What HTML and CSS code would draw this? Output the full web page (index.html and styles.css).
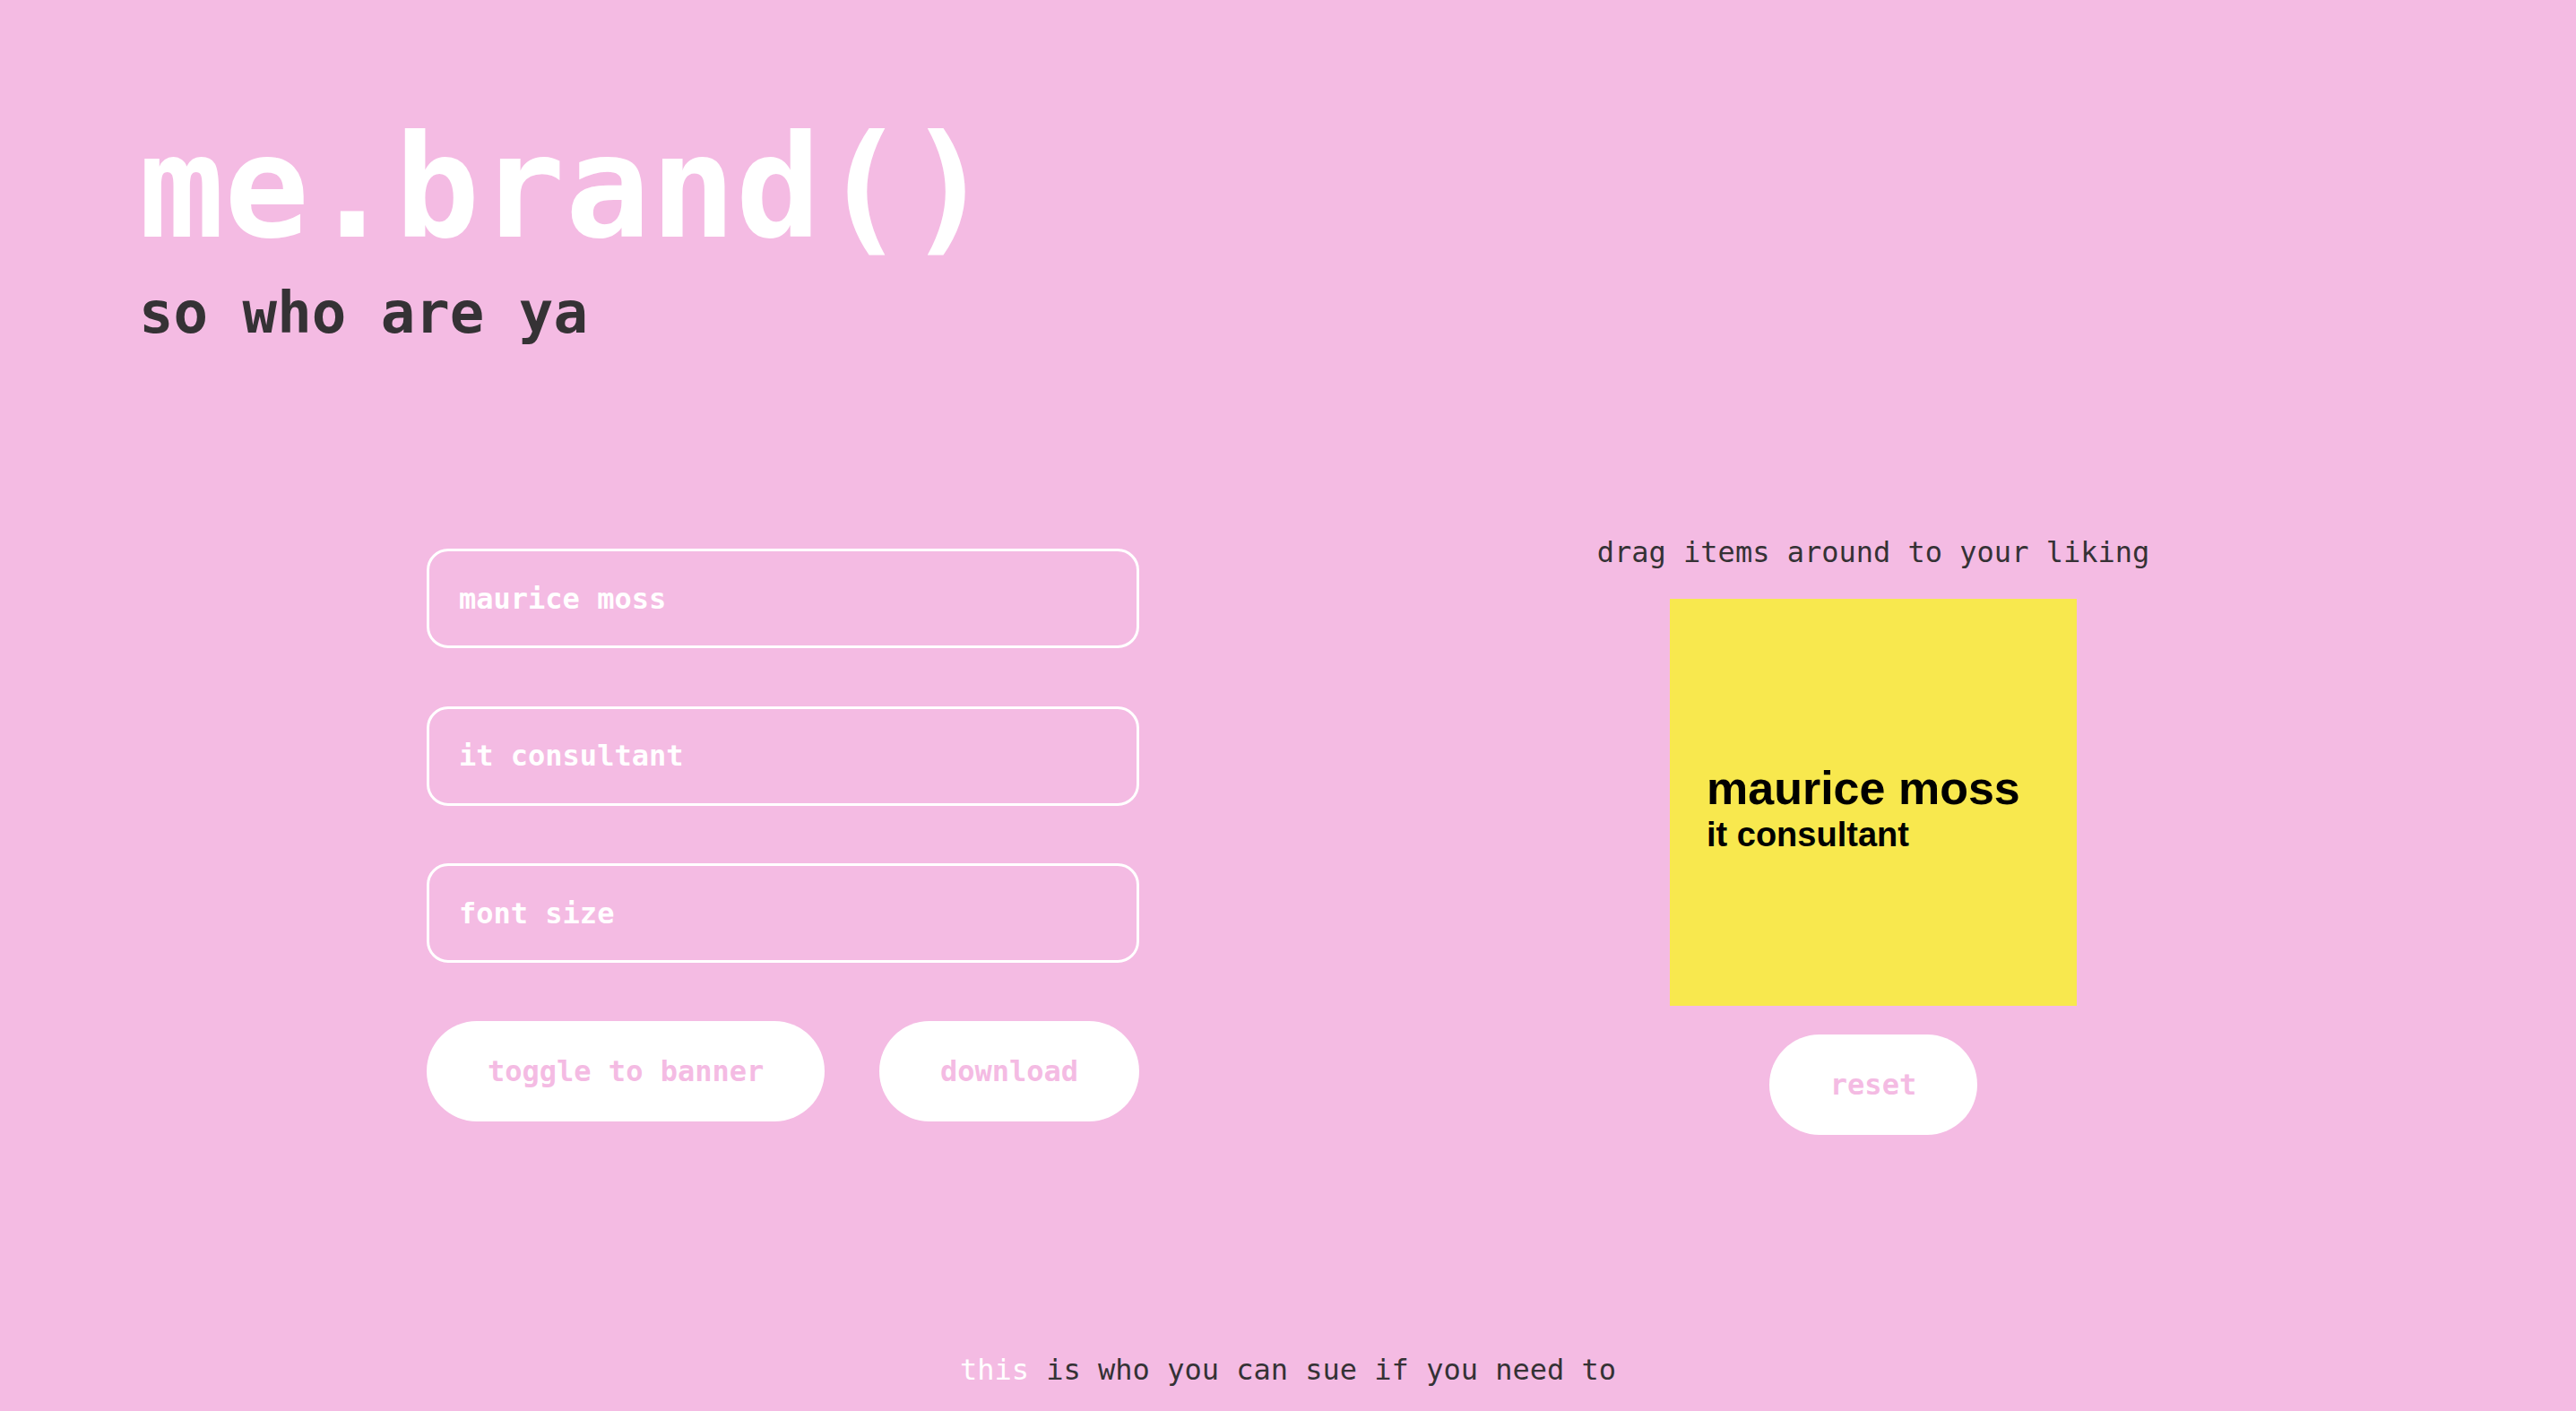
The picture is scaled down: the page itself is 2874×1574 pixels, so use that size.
FILE: index.html
```html
<!DOCTYPE html>
<html lang="en">
<head>
<meta charset="utf-8">
<title>me.brand()</title>
<link rel="stylesheet" href="styles.css">
</head>
<body>
<header class="hero">
  <h1 class="hero-title">me.brand()</h1>
  <h2 class="hero-sub">so who are ya</h2>
</header>
<main class="main">
  <section class="form-col">
    <input class="field" type="text" placeholder="maurice moss">
    <input class="field" type="text" placeholder="it consultant">
    <input class="field" type="text" placeholder="font size">
    <div class="btn-row">
      <button class="btn">toggle to banner</button>
      <button class="btn">download</button>
    </div>
  </section>
  <section class="preview-col">
    <p class="hint">drag items around to your liking</p>
    <div class="card">
      <div class="card-name">maurice moss</div>
      <div class="card-role">it consultant</div>
    </div>
    <button class="btn btn-reset">reset</button>
  </section>
</main>
<footer class="footer"><a class="footer-link" href="#">this</a> is who you can sue if you need to</footer>
</body>
</html>
```
FILE: styles.css
```css
* { box-sizing: border-box; }
html, body { margin: 0; padding: 0; }
body {
  background: #f4bbe3;
  font-family: "DejaVu Sans Mono", "Liberation Mono", monospace;
  color: #353235;
  height: 1574px;
  display: flex;
  flex-direction: column;
}
.hero {
  padding: 130px 0 0 155px;
}
.hero-title {
  margin: 0;
  font-size: 158px;
  line-height: 158px;
  font-weight: bold;
  color: #ffffff;
}
.hero-sub {
  margin: 29px 0 0 0;
  font-size: 64px;
  line-height: 64px;
  font-weight: bold;
  color: #353235;
}
.main {
  display: flex;
  margin-top: 217px;
  padding-left: 476px;
}
.form-col {
  width: 795px;
  padding-top: 14px;
  display: flex;
  flex-direction: column;
  gap: 64.5px;
}
.field {
  height: 111px;
  width: 100%;
  border: 3px solid #ffffff;
  border-radius: 24px;
  background: transparent;
  padding: 0 0 0 33px;
  font-family: "DejaVu Sans Mono", "Liberation Mono", monospace;
  font-size: 32px;
  font-weight: bold;
  color: #ffffff;
  outline: none;
}
.field::placeholder {
  color: #ffffff;
  opacity: 1;
}
.btn-row {
  display: flex;
  justify-content: space-between;
}
.btn {
  height: 112px;
  padding: 0 68px;
  border: none;
  border-radius: 56px;
  background: #ffffff;
  font-family: "DejaVu Sans Mono", "Liberation Mono", monospace;
  font-size: 32px;
  font-weight: bold;
  color: #f4bbe3;
  cursor: pointer;
}
.preview-col {
  width: 700px;
  margin-left: 469px;
  display: flex;
  flex-direction: column;
  align-items: center;
}
.hint {
  margin: 0;
  font-size: 32px;
  line-height: 37px;
  color: #353235;
}
.card {
  margin-top: 33px;
  width: 454px;
  height: 454px;
  background: #f8e84e;
  display: flex;
  flex-direction: column;
  justify-content: center;
  padding: 12px 0 0 41px;
  font-family: "Liberation Sans", Arial, sans-serif;
  font-weight: bold;
  color: #000000;
}
.card-name {
  font-size: 52px;
  line-height: 60px;
}
.card-role {
  font-size: 38px;
  line-height: 44px;
}
.btn-reset {
  margin-top: 32px;
}
.footer {
  margin-top: auto;
  padding-bottom: 27px;
  text-align: center;
  font-size: 32px;
  line-height: 37px;
  color: #353235;
}
.footer-link {
  color: #ffffff;
  text-decoration: none;
}
```
